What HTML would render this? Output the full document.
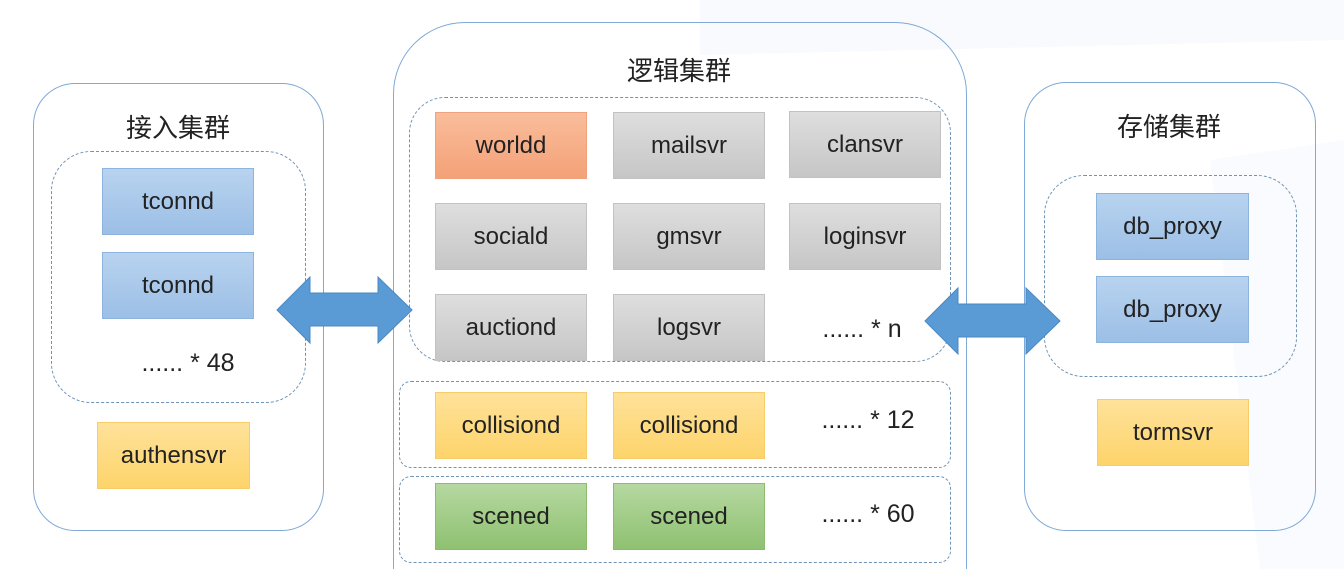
<!DOCTYPE html>
<html><head><meta charset="utf-8"><style>
html,body{margin:0;width:1344px;height:569px;overflow:hidden;}
body{background:#fff;position:relative;font-family:"Liberation Sans","Noto Sans CJK SC",sans-serif;}
#w{position:absolute;left:0;top:0;width:1344px;height:569px;overflow:hidden;}
.a{position:absolute;box-sizing:border-box;}
.outer{border:1.5px solid #7fa9d6;background:transparent;}
.dash{border:1.5px dashed #6f93b5;}
.b{position:absolute;box-sizing:border-box;display:flex;align-items:center;justify-content:center;font-size:24px;color:#222;}
.blue{background:linear-gradient(#b8d3ef,#9cbfe6);border:1px solid #8db3df;}
.org{background:linear-gradient(#f9bd9b,#f4a177);border:1px solid #efa27e;}
.gray{background:linear-gradient(#dedede,#c6c6c6);border:1px solid #c2c2c2;}
.yel{background:linear-gradient(#ffe29a,#fdd46b);border:1px solid #f7cd6c;}
.grn{background:linear-gradient(#b5d8a0,#8fc171);border:1px solid #8dbc70;}
.t{position:absolute;font-size:26px;color:#222;white-space:nowrap;transform:translateX(-50%);}
.d{position:absolute;font-size:25px;color:#222;white-space:nowrap;transform:translateX(-50%);}
</style></head><body><div id="w">
<svg class="a" style="left:0;top:0" width="1344" height="569">
<polygon points="700,0 1344,0 1344,40 700,55" fill="#f8fafd"/>
<polygon points="1210,160 1344,140 1344,569 1260,569" fill="#f9fbfe"/>
</svg>
<!-- left -->
<div class="a outer" style="left:33px;top:83px;width:291px;height:448px;border-radius:42px;"></div>
<div class="t" style="left:178px;top:108px;">接入集群</div>
<div class="a dash" style="left:51px;top:151px;width:255px;height:252px;border-radius:40px;"></div>
<div class="b blue" style="left:102px;top:168px;width:152px;height:67px;">tconnd</div>
<div class="b blue" style="left:102px;top:252px;width:152px;height:67px;">tconnd</div>
<div class="d" style="left:188px;top:349px;">...... * 48</div>
<div class="b yel" style="left:97px;top:422px;width:153px;height:67px;">authensvr</div>
<!-- middle -->
<div class="a outer" style="left:393px;top:22px;width:574px;height:547px;border-radius:72px 72px 0 0;border-bottom:none;"></div>
<div class="t" style="left:679px;top:51px;">逻辑集群</div>
<div class="a dash" style="left:409px;top:97px;width:542px;height:265px;border-radius:36px;"></div>
<div class="b org" style="left:435px;top:112px;width:152px;height:67px;">worldd</div>
<div class="b gray" style="left:613px;top:112px;width:152px;height:67px;">mailsvr</div>
<div class="b gray" style="left:789px;top:111px;width:152px;height:67px;">clansvr</div>
<div class="b gray" style="left:435px;top:203px;width:152px;height:67px;">sociald</div>
<div class="b gray" style="left:613px;top:203px;width:152px;height:67px;">gmsvr</div>
<div class="b gray" style="left:789px;top:203px;width:152px;height:67px;">loginsvr</div>
<div class="b gray" style="left:435px;top:294px;width:152px;height:67px;">auctiond</div>
<div class="b gray" style="left:613px;top:294px;width:152px;height:67px;">logsvr</div>
<div class="d" style="left:862px;top:315px;">...... * n</div>
<div class="a dash" style="left:399px;top:381px;width:552px;height:87px;border-radius:12px;"></div>
<div class="b yel" style="left:435px;top:392px;width:152px;height:67px;">collisiond</div>
<div class="b yel" style="left:613px;top:392px;width:152px;height:67px;">collisiond</div>
<div class="d" style="left:868px;top:406px;">...... * 12</div>
<div class="a dash" style="left:399px;top:476px;width:552px;height:87px;border-radius:12px;"></div>
<div class="b grn" style="left:435px;top:483px;width:152px;height:67px;">scened</div>
<div class="b grn" style="left:613px;top:483px;width:152px;height:67px;">scened</div>
<div class="d" style="left:868px;top:500px;">...... * 60</div>
<!-- right -->
<div class="a outer" style="left:1024px;top:82px;width:292px;height:449px;border-radius:42px;"></div>
<div class="t" style="left:1169px;top:107px;">存储集群</div>
<div class="a dash" style="left:1044px;top:175px;width:253px;height:202px;border-radius:40px;"></div>
<div class="b blue" style="left:1096px;top:193px;width:153px;height:67px;">db_proxy</div>
<div class="b blue" style="left:1096px;top:276px;width:153px;height:67px;">db_proxy</div>
<div class="b yel" style="left:1097px;top:399px;width:152px;height:67px;">tormsvr</div>
<!-- arrows -->
<svg class="a" style="left:0;top:0" width="1344" height="569">
<polygon points="277,310 310,277 310,293 378,293 378,277 412,310 378,343 378,326 310,326 310,343" fill="#5b9bd5" stroke="#4a88c2" stroke-width="1"/>
<polygon points="925,321 958,288 958,304 1026,304 1026,288 1060,321 1026,354 1026,337 958,337 958,354" fill="#5b9bd5" stroke="#4a88c2" stroke-width="1"/>
</svg>
</div></body></html>
